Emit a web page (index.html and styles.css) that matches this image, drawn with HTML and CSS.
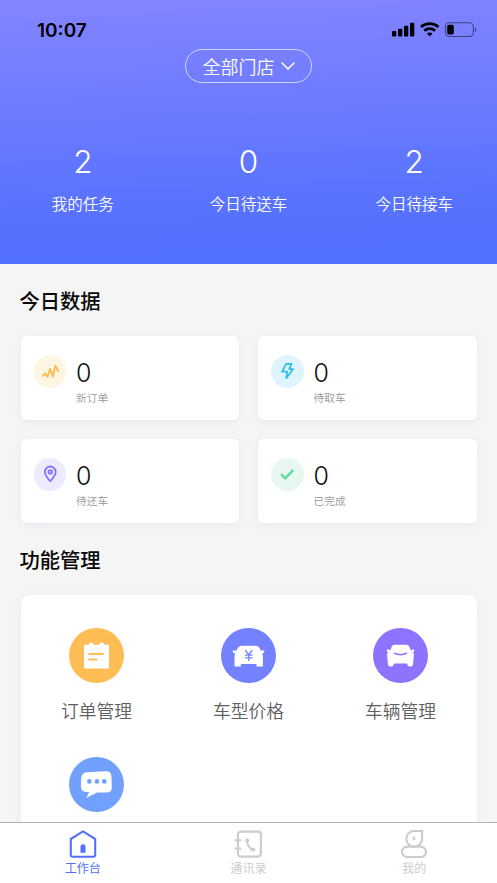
FILE: index.html
```html
<!DOCTYPE html>
<html lang="zh-CN">
<head>
<meta charset="utf-8">
<title>工作台</title>
<link rel="stylesheet" href="styles.css">
</head>
<body>
<div class="app">
  <header class="hero">
    <div class="status">
      <span class="time">10:07</span>
      <svg class="status-icons" width="85" height="16" viewBox="0 0 85 16">
        <rect x="0" y="9" width="4.3" height="5.5" rx="1"/>
        <rect x="6" y="6.8" width="4.3" height="7.7" rx="1"/>
        <rect x="12" y="3.8" width="4.3" height="10.7" rx="1"/>
        <rect x="18" y="0.7" width="4.3" height="13.8" rx="1"/>
        <g fill="none" stroke="#000" stroke-width="2.7">
          <path d="M29 5.1a12.8 12.8 0 0 1 17.4 0"/>
          <path d="M32.3 8.8a8 8 0 0 1 10.8 0"/>
        </g>
        <path d="M34.9 11.6a4.4 4.4 0 0 1 5.6 0L37.7 14.6z"/>
        <rect x="53.4" y="0.7" width="28" height="13.8" rx="4" fill="none" stroke="#000" stroke-opacity=".5" stroke-width="1.1"/>
        <rect x="55.2" y="2.7" width="6.6" height="9.8" rx="1.8"/>
        <path d="M83 5.2c1.6.8 1.6 4.1 0 4.9z" fill-opacity=".5"/>
      </svg>
    </div>
    <div class="store">
      <span>全部门店</span>
      <svg width="14" height="8" viewBox="0 0 14 8"><path d="M1 1l6 6 6-6" fill="none" stroke="#fff" stroke-width="1.5" stroke-linecap="round"/></svg>
    </div>
    <div class="stats">
      <div class="stat"><b>2</b><span>我的任务</span></div>
      <div class="stat"><b>0</b><span>今日待送车</span></div>
      <div class="stat"><b>2</b><span>今日待接车</span></div>
    </div>
  </header>

  <main class="content">
    <h2>今日数据</h2>
    <div class="cards">
      <div class="card">
        <div class="badge badge-orange"><svg viewBox="0 0 32 32"><path d="M9 20.5l1.8-2.4 2.5 3.3 2.6-7.8 2.7 7.8 2.4-11.2 2.7 5.7" fill="none" stroke="#ffba4d" stroke-width="1.8" stroke-linecap="round" stroke-linejoin="round"/></svg></div>
        <div class="figure"><b>0</b><span>新订单</span></div>
      </div>
      <div class="card">
        <div class="badge badge-cyan"><svg viewBox="0 0 32 32"><path d="M14.9 8.8h5.3l-2.3 5h4l-6.9 9 1-6.4h-5.1z" fill="none" stroke="#29bfe8" stroke-width="1.7" stroke-linejoin="round"/></svg></div>
        <div class="figure"><b>0</b><span>待取车</span></div>
      </div>
      <div class="card">
        <div class="badge badge-purple"><svg viewBox="0 0 32 32"><g fill="none" stroke="#8b70ff" stroke-width="1.8"><path d="M16 22.9c-3.1-3.5-5.3-6.2-5.3-9.2a5.3 5.3 0 0 1 10.6 0c0 3-2.2 5.7-5.3 9.2z" stroke-linejoin="round"/><circle cx="16" cy="13.7" r="1.7"/></g></svg></div>
        <div class="figure"><b>0</b><span>待还车</span></div>
      </div>
      <div class="card">
        <div class="badge badge-green"><svg viewBox="0 0 32 32"><path d="M10.7 16.7l3.3 3.4 7.3-7.6" fill="none" stroke="#5fdda0" stroke-width="2.5" stroke-linecap="round" stroke-linejoin="round"/></svg></div>
        <div class="figure"><b>0</b><span>已完成</span></div>
      </div>
    </div>
    <h2>功能管理</h2>
    <div class="panel">
      <div class="tool">
        <svg viewBox="0 0 55 55"><circle cx="27.5" cy="27.5" r="27.5" fill="#ffbd55"/><g fill="#fff"><rect x="15" y="16.7" width="25" height="23.8" rx="1.2"/><circle cx="22.2" cy="16.7" r="2.3"/><circle cx="32.8" cy="16.7" r="2.3"/></g><path d="M20.2 26h13.8M20.2 31.5h7.4" stroke="#ffbd55" stroke-width="2.1" stroke-linecap="round"/></svg>
        <span>订单管理</span>
      </div>
      <div class="tool">
        <svg viewBox="0 0 55 55"><circle cx="27.5" cy="27.5" r="27.5" fill="#7482ff"/><path d="M15.8 22.6q.8-4.9 5.8-4.9h12.2q5 0 5.8 4.9l3.6-.1q.7 2.6-2.2 3.1.9 1.1.9 2.7v10.1h-6.4v-2.5H19.9v2.5h-6.4V28.300q0-1.600.9-2.700-3.300-.5-2.600-3.100z" fill="#fff"/><path d="M24.3 22.3l3.5 4.3 3.5-4.3M24 27.1h7.600M24 29.8h7.600M27.8 26.6v6.300" fill="none" stroke="#7482ff" stroke-width="1.35"/></svg>
        <span>车型价格</span>
      </div>
      <div class="tool">
        <svg viewBox="0 0 55 55"><circle cx="27.5" cy="27.5" r="27.5" fill="#8d73ff"/><path d="M17.3 22.2l1.2-3.2q.8-2.2 3.2-2.2h11.6q2.4 0 3.2 2.2l1.2 3.2 3.2-1q1.2 2.1-1.1 2.9l.5.5q.7.8.6 2.4l-.8 8.8q-.2 2.8-2.9 2.8-2.4 0-3.2-3.2H21q-.8 3.2-3.2 3.2-2.7 0-2.9-2.8l-.8-8.8q-.1-1.6.6-2.4l.5-.5q-2.3-.8-1.100-2.900z" fill="#fff"/><path d="M21.6 25.3q5.9 2.7 11.8 0" fill="none" stroke="#8d73ff" stroke-width="1.5" stroke-linecap="round"/></svg>
        <span>车辆管理</span>
      </div>
      <div class="tool">
        <svg viewBox="0 0 55 55"><circle cx="27.5" cy="27.5" r="27.5" fill="#71a0ff"/><path d="M18 15.3l18.5-1.1q6-.3 6 5.6l.3 10.7q0 5.3-5.6 5.1l-9-.1-11 5.6 3-6.1-3-.1q-5.4-.1-5.3-5.5l.3-8.1q.2-5.600 5.800-6z" fill="#fff"/><g fill="#71a0ff"><circle cx="20.3" cy="24.4" r="2.3"/><circle cx="27.9" cy="24.4" r="2.3"/><circle cx="35.3" cy="24.4" r="2.3"/></g></svg>
      </div>
    </div>
  </main>

  <nav class="tabs">
    <div class="tab tab-active">
      <svg viewBox="0 0 28 28"><path d="M1.8 9L14 1.4 26.2 9v15.7q0 2-2 2H3.8q-2 0-2-2z" fill="none" stroke="currentColor" stroke-width="2.1" stroke-linejoin="round"/><path d="M11.5 22.8v-6a2.5 2.5 0 0 1 5 0v6z" fill="currentColor"/></svg>
      <span>工作台</span>
    </div>
    <div class="tab">
      <svg viewBox="0 0 28 28"><g fill="none" stroke="currentColor" stroke-width="2.1" stroke-linecap="round"><rect x="3.9" y="1.6" width="23" height="25" rx="3"/><path d="M1.5 10.3h5M1.5 18.5h5"/></g><path d="M13.2 10.2q-.8 6.6 5.8 9.4" fill="none" stroke="currentColor" stroke-width="2"/><path d="M13.2 10v1.2M18.3 19.5l1.2.1" stroke="currentColor" stroke-width="3.6" stroke-linecap="round"/></svg>
      <span>通讯录</span>
    </div>
    <div class="tab">
      <svg viewBox="0 0 28 28"><g fill="none" stroke="currentColor" stroke-width="2.1"><path d="M14.2.9h7.900v7.500a7.900 7.900 0 1 1-7.900-7.500z"/><rect x="2" y="16.6" width="24" height="10.4" rx="5.2"/></g><ellipse cx="14" cy="8.6" rx="1.3" ry="2.1" fill="currentColor"/></svg>
      <span>我的</span>
    </div>
  </nav>
</div>
</body>
</html>
```
FILE: styles.css
```css
* { box-sizing: border-box; }
body {
  margin: 0;
  background: #f5f5f5;
  font-family: "Noto Sans CJK SC", sans-serif;
}
svg { display: block; flex: none; }
b, h2 { margin: 0; }
.app {
  display: flex;
  flex-direction: column;
  height: 883px;
  overflow: hidden;
}
.hero {
  flex: none;
  height: 264px;
  color: #fff;
  background: linear-gradient(178deg, #8484ff 0%, #5672ff 78%, #5271ff 100%);
}
.status {
  display: flex;
  justify-content: space-between;
  height: 49px;
  padding: 22px 20px 0 37px;
}
.time {
  color: #000;
  font: 600 19px/17px Inter, sans-serif;
}
.store {
  display: flex;
  align-items: center;
  justify-content: center;
  gap: 6px;
  width: 127px;
  height: 34px;
  margin: 0 auto;
  border: 1px solid rgba(255, 255, 255, .65);
  border-radius: 17px;
  font-size: 18px;
  font-weight: 350;
  line-height: 32px;
}
.stats {
  display: grid;
  grid-template-columns: repeat(3, 1fr);
  padding-top: 58px;
}
.stat {
  display: flex;
  flex-direction: column;
  align-items: center;
}
.stat b {
  font: 300 31.5px/41px Inter, sans-serif;
}
.stat span {
  margin-top: 9px;
  font-size: 15.5px;
  font-weight: 350;
  line-height: 24px;
}
.content {
  flex: 1;
  min-height: 0;
  padding: 21px 20.5px 0;
  overflow: hidden;
}
h2 {
  margin-left: -1px;
  color: #080808;
  font-size: 20.3px;
  font-weight: 500;
  line-height: 30px;
}
.cards {
  display: grid;
  grid-template-columns: 1fr 1fr;
  gap: 19px;
  margin: 21px 0;
}
.card {
  display: flex;
  gap: 10px;
  height: 84px;
  padding: 19px 13px 0;
  background: #fff;
  border-radius: 6px;
  box-shadow: 0 2px 8px rgba(90, 120, 220, .09);
}
.badge {
  flex: none;
  width: 32.5px;
  height: 32.5px;
  border-radius: 50%;
}
.badge-orange { background: #fff5e3; }
.badge-cyan { background: #dff5fd; }
.badge-purple { background: #eeeaff; }
.badge-green { background: #e8f8f1; }
.figure {
  display: flex;
  flex-direction: column;
  padding-top: 3px;
}
.figure b {
  color: #111;
  font: 300 25px/31px Inter, sans-serif;
}
.figure span {
  margin-top: 1px;
  color: #999;
  font-size: 10.7px;
  font-weight: 350;
  line-height: 16px;
}
.panel {
  display: grid;
  grid-template-columns: repeat(3, 1fr);
  grid-auto-rows: 129.5px;
  height: 300px;
  margin-top: 21px;
  padding-top: 32.5px;
  background: #fff;
  border-radius: 9px;
  box-shadow: 0 2px 8px rgba(90, 120, 220, .09);
}
.tool {
  display: flex;
  flex-direction: column;
  align-items: center;
}
.tool svg { width: 55px; height: 55px; }
.tool span {
  margin-top: 14.4px;
  color: #606060;
  font-size: 17.8px;
  font-weight: 350;
  line-height: 26px;
}
.tabs {
  display: grid;
  flex: none;
  grid-template-columns: repeat(3, 1fr);
  height: 61px;
  background: #fff;
  border-top: 1px solid #b3b3b3;
}
.tab {
  display: flex;
  flex-direction: column;
  align-items: center;
  padding-top: 7px;
  color: #ccc;
}
.tab-active { color: #5470ff; }
.tab svg { width: 28px; height: 28px; }
.tab span {
  margin-top: 1px;
  font-size: 12.1px;
  line-height: 18px;
}
```
